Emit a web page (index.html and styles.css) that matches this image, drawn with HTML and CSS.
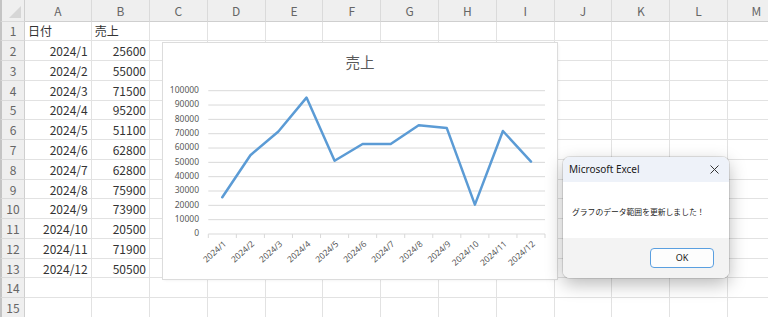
FILE: index.html
```html
<!DOCTYPE html>
<html lang="ja">
  <head>
    <meta charset="UTF-8" />
    <meta name="viewport" content="width=device-width, initial-scale=1.0" />
    <title>Excel - 売上</title>
    <link rel="stylesheet" href="styles.css">
  </head>
  <body>
    <div class="sheet"></div>

    <div class="chart">
      <svg class="plot" width="394" height="236" viewBox="0 0 394 236"></svg>
    </div>

    <div class="dialog">
      <div class="dialog-title">
        <span>Microsoft Excel</span>
        <svg class="close" width="9" height="9" viewBox="0 0 9 9">
          <path d="M0.5 0.5 L8.5 8.5 M8.5 0.5 L0.5 8.5" />
        </svg>
      </div>
      <div class="dialog-body">グラフのデータ範囲を更新しました！</div>
      <div class="dialog-foot">
        <button class="ok">OK</button>
      </div>
    </div>

    <script>
      "use strict";
      const cols = ["A", "B", "C", "D", "E", "F", "G", "H", "I", "J", "K", "L", "M"];
      const sales = [25600, 55000, 71500, 95200, 51100, 62800, 62800, 75900, 73900, 20500, 71900, 50500];
      const months = sales.map((v, i) => "2024/" + (i + 1));

      // grid
      const sheet = document.querySelector(".sheet");
      function cell(cls, text) {
        const d = document.createElement("div");
        d.className = cls;
        d.textContent = text;
        sheet.appendChild(d);
      }
      cell("corner", "");
      cols.forEach((c) => cell("col-head", c));
      for (let r = 1; r <= 15; r++) {
        cell("row-head", r);
        cols.forEach((c, i) => {
          let text = "";
          let cls = "cell";
          if (r === 1 && i < 2) text = i === 0 ? "日付" : "売上";
          if (r > 1 && r <= 13 && i < 2) {
            text = i === 0 ? months[r - 2] : sales[r - 2];
            cls += " num";
          }
          cell(cls, text);
        });
      }

      // chart
      const plot = document.querySelector(".plot");
      const axisLeft = 45.3, axisRight = 382, axisTop = 47.7, axisBottom = 191;
      const step = (axisRight - axisLeft) / 12;
      let html = `<text x="197" y="21" class="title">売上</text>`;
      for (let k = 0; k <= 10; k++) {
        const y = axisBottom - (k * (axisBottom - axisTop)) / 10;
        html += `<line x1="${axisLeft}" x2="${axisRight}" y1="${y}" y2="${y}" class="grid"/>`;
        html += `<text x="36" y="${y}" class="ylab">${k * 10000}</text>`;
      }
      for (let i = 0; i <= 12; i++) {
        const x = axisLeft + i * step;
        html += `<line x1="${x}" x2="${x}" y1="${axisBottom}" y2="${axisBottom + 4}" class="grid"/>`;
      }
      const pts = sales.map((v, i) => {
        const x = axisLeft + (i + 0.5) * step;
        const y = axisBottom - (v / 100000) * (axisBottom - axisTop);
        html += `<text class="xlab" transform="translate(${x + 3} 200) rotate(-42)">${months[i]}</text>`;
        return x.toFixed(1) + "," + y.toFixed(1);
      });
      html += `<polyline class="line" points="${pts.join(" ")}"/>`;
      plot.innerHTML = html;
    </script>
  </body>
</html>
```

FILE: styles.css
```css
* {
  margin: 0;
  padding: 0;
  box-sizing: border-box;
}

body {
  width: 768px;
  height: 317px;
  overflow: hidden;
  background-color: white;
  font-family: "Noto Sans CJK JP", "Noto Sans", sans-serif;
}

.sheet {
  display: grid;
  grid-template-columns: 25px 66.7px 58.3px repeat(11, 57.8px);
  grid-template-rows: 21.5px repeat(15, 19.77px);
  font-size: 12px;
}

.sheet div {
  border-right: 1px solid #e2e2e2;
  border-bottom: 1px solid #e2e2e2;
  white-space: nowrap;
  overflow: hidden;
}

.cell {
  display: flex;
  align-items: center;
  padding: 0 3px;
  color: #333;
}
.num {
  justify-content: flex-end;
}

.corner,
.col-head,
.row-head {
  background-color: #efefef;
  color: #666;
  display: flex;
  align-items: center;
  justify-content: center;
}
.sheet .col-head {
  border-right-color: #dadada;
  border-bottom-color: #cfcfcf;
}
.sheet .row-head,
.sheet .corner {
  border-left: 2px solid #c4c4c4;
  border-right-color: #cfcfcf;
  border-bottom-color: #dadada;
}
.corner {
  position: relative;
}
.corner::after {
  content: "";
  position: absolute;
  right: 3px;
  bottom: 3px;
  border-left: 12px solid transparent;
  border-bottom: 12px solid #d6d6d6;
}

/* chart */
.chart {
  position: absolute;
  left: 163px;
  top: 43px;
  width: 394px;
  height: 236px;
  background-color: white;
  box-shadow: 0 0 0 1px #dcdcdc, 1px 1px 3px rgba(0, 0, 0, 0.08);
}
.plot {
  display: block;
}
.plot .title {
  font-size: 14.5px;
  fill: #595959;
  text-anchor: middle;
  dominant-baseline: middle;
}
.plot .grid {
  stroke: #d9d9d9;
  stroke-width: 1;
}
.plot .ylab {
  font-family: "Noto Sans", sans-serif;
  font-size: 8.5px;
  fill: #595959;
  text-anchor: end;
  dominant-baseline: middle;
}
.plot .xlab {
  font-family: "Noto Sans", sans-serif;
  font-size: 8.5px;
  fill: #595959;
  text-anchor: end;
  dominant-baseline: middle;
}
.plot .line {
  fill: none;
  stroke: #5b9bd5;
  stroke-width: 2.5;
  stroke-linejoin: round;
  stroke-linecap: round;
}

/* message box */
.dialog {
  position: absolute;
  left: 563px;
  top: 157px;
  width: 166px;
  height: 121px;
  border-radius: 7px;
  overflow: hidden;
  background-color: white;
  display: flex;
  flex-direction: column;
  box-shadow: 0 6px 18px rgba(0, 0, 0, 0.28), 0 0 0 1px rgba(0, 0, 0, 0.1);
}
.dialog-title {
  height: 24.5px;
  background-color: #eef2f9;
  display: flex;
  align-items: center;
  justify-content: space-between;
  padding: 0 10px 0 6px;
  font-family: "Noto Sans", sans-serif;
  font-size: 10px;
  color: #1a1a1a;
}
.close path {
  stroke: #333;
  stroke-width: 1;
  fill: none;
}
.dialog-body {
  flex: 1;
  display: flex;
  align-items: center;
  padding: 3px 0 0 9px;
  font-size: 7.8px;
  color: #1a1a1a;
}
.dialog-foot {
  height: 40.5px;
  background-color: #f3f3f3;
  display: flex;
  justify-content: flex-end;
  align-items: center;
  padding-right: 15px;
}
.ok {
  width: 64px;
  height: 19.5px;
  border: 1.5px solid #5a9fe0;
  border-radius: 4px;
  background-color: #fdfdfd;
  font-family: "Noto Sans", sans-serif;
  font-size: 9px;
  color: #1a1a1a;
}
```
